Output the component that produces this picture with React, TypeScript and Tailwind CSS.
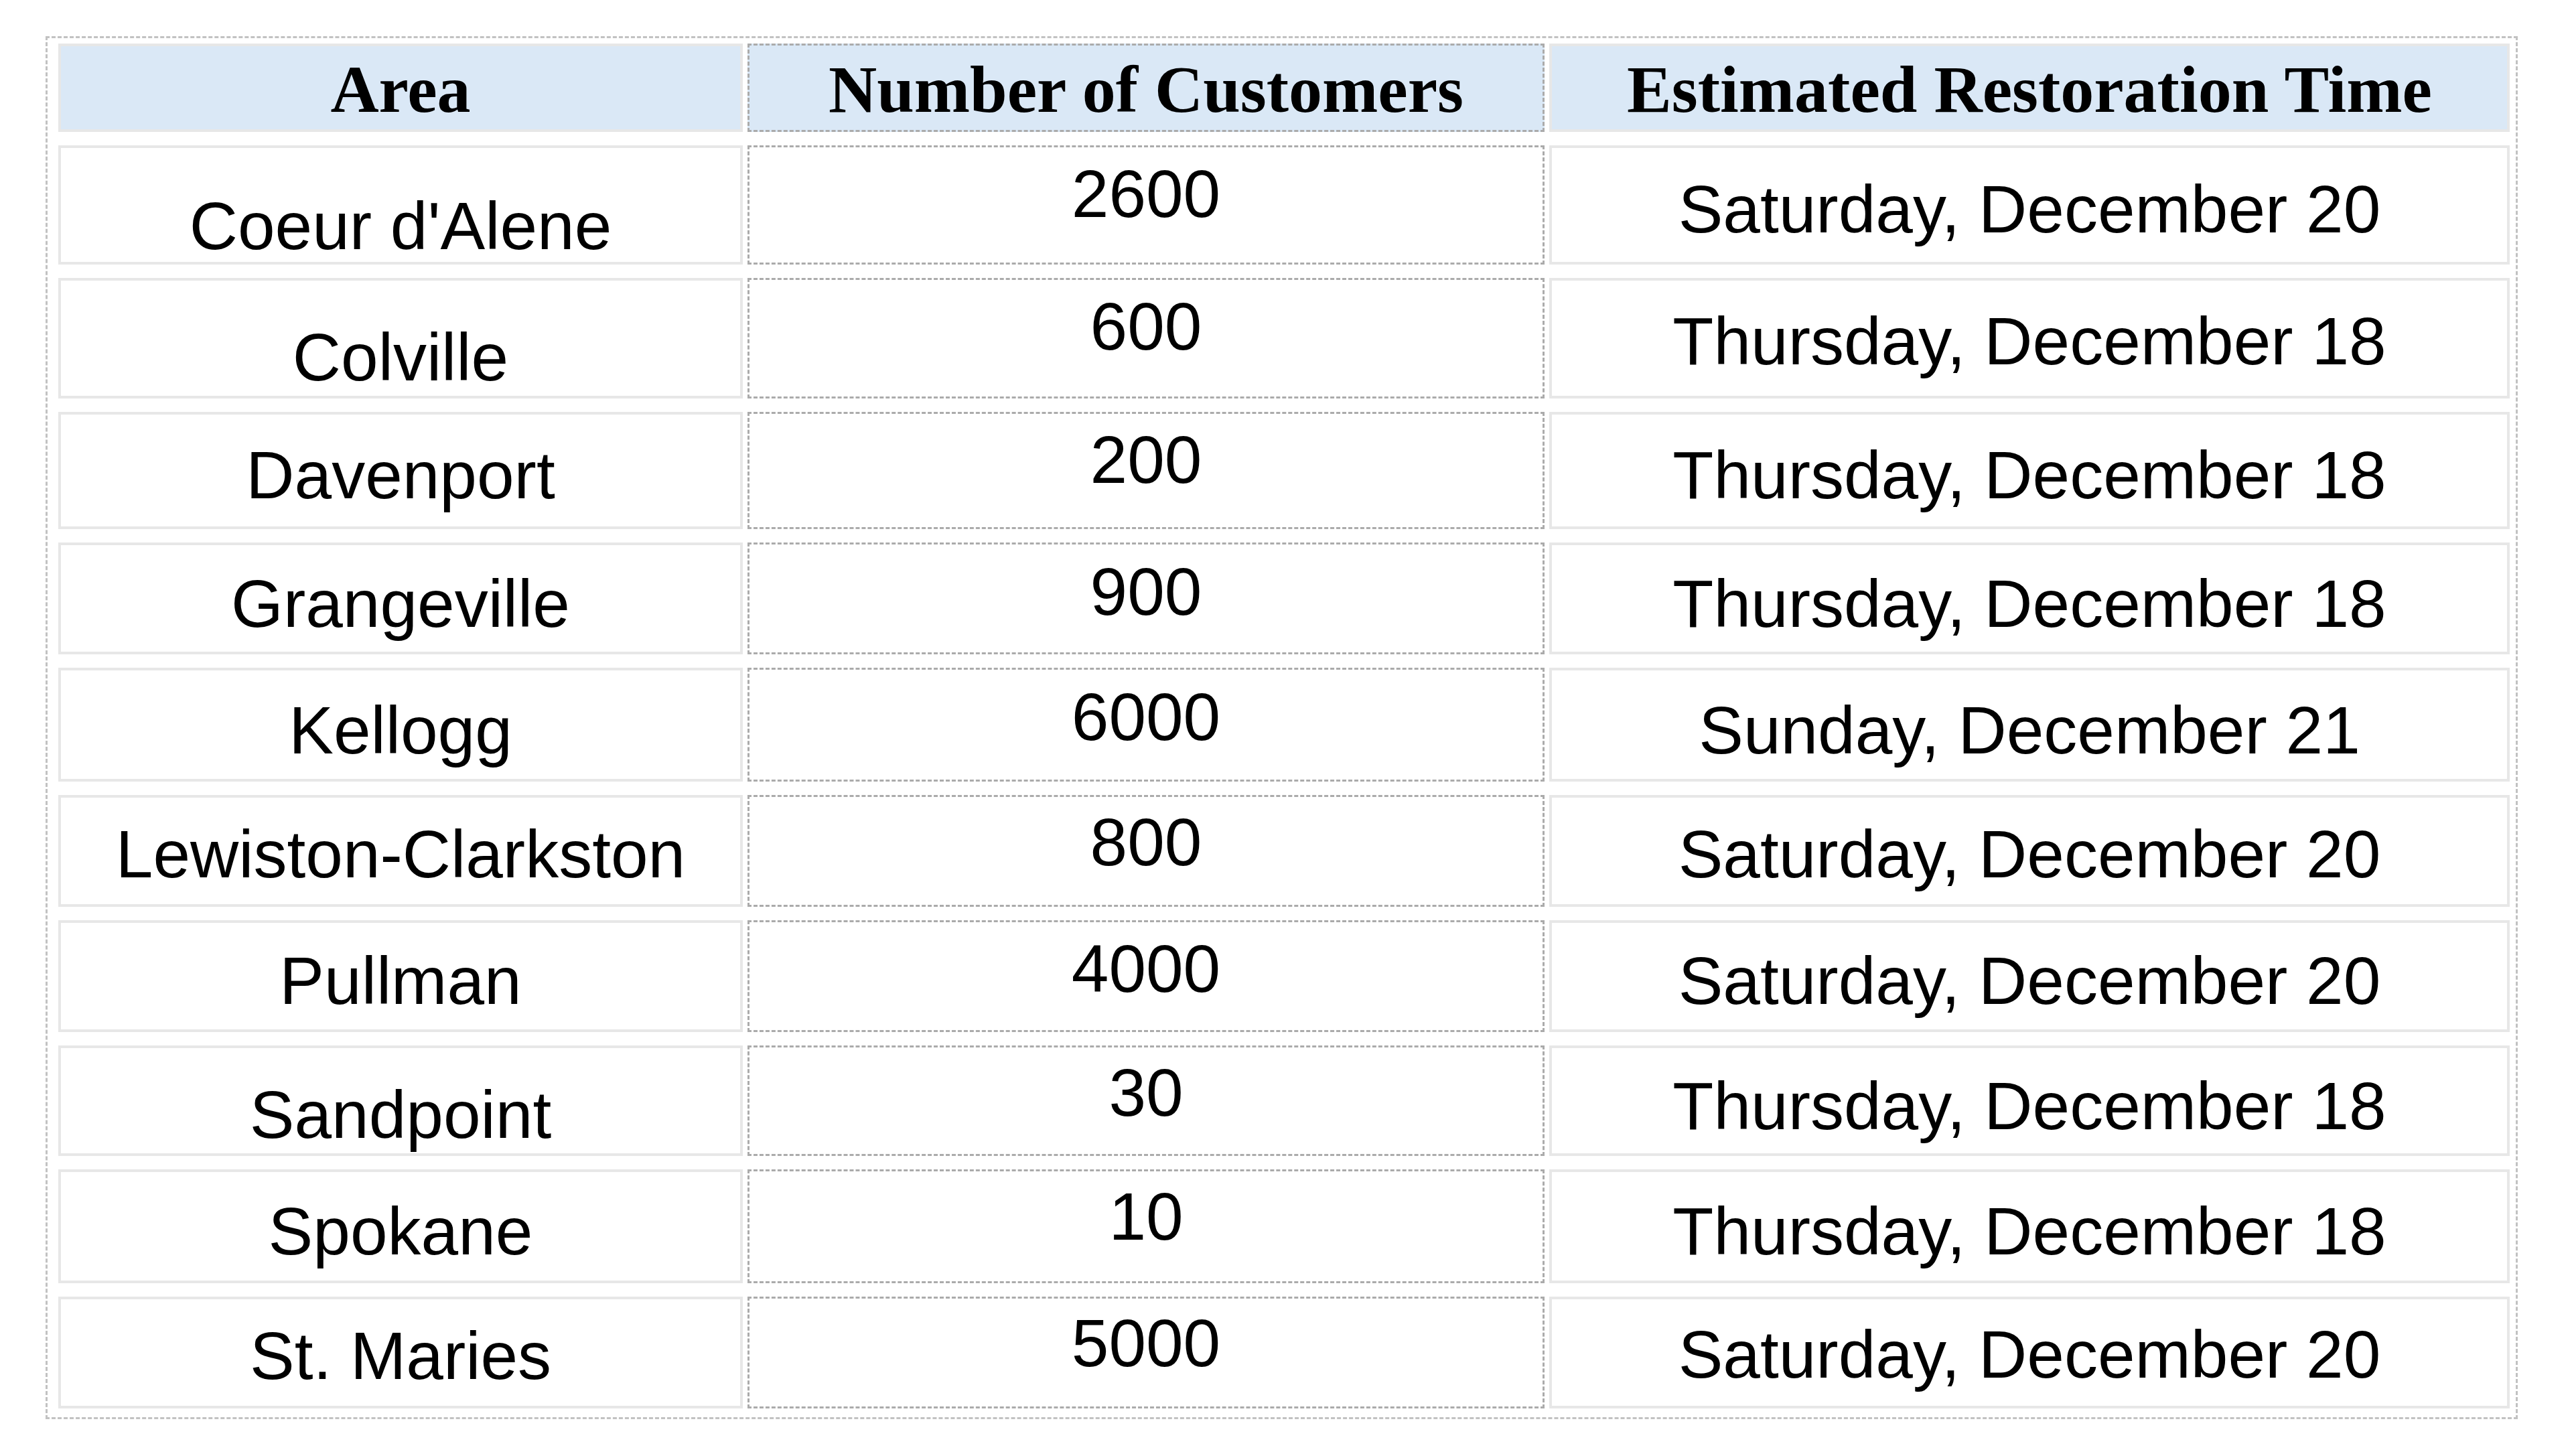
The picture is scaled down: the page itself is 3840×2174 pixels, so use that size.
const rows = [
  { area: 'Coeur d\'Alene', count: '2600', eta: 'Saturday, December 20', h: 'h-[178px]', p1: 'pt-[66px]', p2: 'pt-[19px]', p3: 'pt-[41px]' },
  { area: 'Colville', count: '600', eta: 'Thursday, December 18', h: 'h-[180px]', p1: 'pt-[64px]', p2: 'pt-[19px]', p3: 'pt-[40px]' },
  { area: 'Davenport', count: '200', eta: 'Thursday, December 18', h: 'h-[175px]', p1: 'pt-[40px]', p2: 'pt-[18px]', p3: 'pt-[40px]' },
  { area: 'Grangeville', count: '900', eta: 'Thursday, December 18', h: 'h-[167px]', p1: 'pt-[37px]', p2: 'pt-[20px]', p3: 'pt-[37px]' },
  { area: 'Kellogg', count: '6000', eta: 'Sunday, December 21', h: 'h-[170px]', p1: 'pt-[39px]', p2: 'pt-[20px]', p3: 'pt-[39px]' },
  { area: 'Lewiston-Clarkston', count: '800', eta: 'Saturday, December 20', h: 'h-[167px]', p1: 'pt-[34px]', p2: 'pt-[17px]', p3: 'pt-[34px]' },
  { area: 'Pullman', count: '4000', eta: 'Saturday, December 20', h: 'h-[167px]', p1: 'pt-[36px]', p2: 'pt-[19px]', p3: 'pt-[36px]' },
  { area: 'Sandpoint', count: '30', eta: 'Thursday, December 18', h: 'h-[165px]', p1: 'pt-[49px]', p2: 'pt-[17px]', p3: 'pt-[36px]' },
  { area: 'Spokane', count: '10', eta: 'Thursday, December 18', h: 'h-[170px]', p1: 'pt-[38px]', p2: 'pt-[17px]', p3: 'pt-[38px]' },
  { area: 'St. Maries', count: '5000', eta: 'Saturday, December 20', h: 'h-[167px]', p1: 'pt-[34px]', p2: 'pt-[16px]', p3: 'pt-[32px]' },
];

// light solid cell (first and last column)
const solid = 'flex justify-center border-4 border-[#e7e7e7]';
// middle column uses a dashed grey edge
const dashed = 'flex justify-center border-[3px] border-dashed border-[#ababab]';

function HeaderCell({ label, middle }: { label: string; middle?: boolean }) {
  return (
    <div className={(middle ? dashed : solid) + ' h-[132px] items-center bg-[#dae8f6] pt-[6px]'}>
      <span className="font-['Liberation_Serif','Times_New_Roman',serif] text-[100px] font-bold leading-none text-black">
        {label}
      </span>
    </div>
  );
}

export default function App() {
  return (
    <div className="min-h-screen bg-white pl-[68px] pt-[54px]">
      <div className="w-fit border-[3px] border-dashed border-[#c2c2c2] pb-[13px] pl-[16px] pr-[9px] pt-[8px]">
        <div className="grid grid-cols-[1022px_1190px_1434px] gap-x-[7px] gap-y-[20px] font-['Liberation_Sans',Arial,sans-serif] text-[100px] leading-none text-black">
          <HeaderCell label="Area" />
          <HeaderCell label="Number of Customers" middle />
          <HeaderCell label="Estimated Restoration Time" />
          {rows.map((r) => (
            <div key={r.area} className="contents">
              <div className={`${solid} ${r.h} ${r.p1} items-start`}>
                <span>{r.area}</span>
              </div>
              <div className={`${dashed} ${r.h} ${r.p2} items-start`}>
                <span>{r.count}</span>
              </div>
              <div className={`${solid} ${r.h} ${r.p3} items-start`}>
                <span>{r.eta}</span>
              </div>
            </div>
          ))}
        </div>
      </div>
    </div>
  );
}
